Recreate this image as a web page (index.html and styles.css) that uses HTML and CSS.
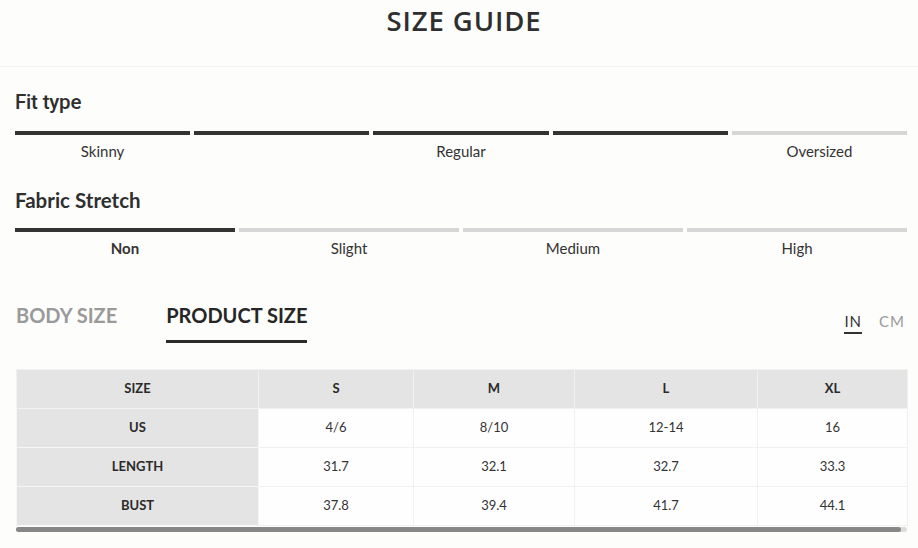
FILE: index.html
```html
<!DOCTYPE html>
<html>
<head>
<meta charset="utf-8">
<link rel="stylesheet" href="styles.css">
</head>
<body>
<header class="top">
  <h1 class="title">SIZE GUIDE</h1>
</header>
<main class="content">
  <section class="scale">
    <h2 class="scale-title fit-title">Fit type</h2>
    <div class="bars five">
      <span class="bar on"></span><span class="bar on"></span><span class="bar on"></span><span class="bar on"></span><span class="bar"></span>
    </div>
    <div class="labels five">
      <span class="lbl">Skinny</span><span class="lbl"></span><span class="lbl">Regular</span><span class="lbl"></span><span class="lbl">Oversized</span>
    </div>
  </section>
  <section class="scale stretch">
    <h2 class="scale-title">Fabric Stretch</h2>
    <div class="bars four">
      <span class="bar on"></span><span class="bar"></span><span class="bar"></span><span class="bar"></span>
    </div>
    <div class="labels four">
      <span class="lbl strong">Non</span><span class="lbl">Slight</span><span class="lbl">Medium</span><span class="lbl">High</span>
    </div>
  </section>
  <div class="tabs-row">
    <div class="tabs">
      <span class="tab">BODY SIZE</span>
      <span class="tab active">PRODUCT SIZE</span>
    </div>
    <div class="units">
      <span class="unit active">IN</span>
      <span class="unit">CM</span>
    </div>
  </div>
  <div class="table-wrap">
    <table class="sizes">
      <colgroup>
        <col class="c1"><col class="c2"><col class="c3"><col class="c4"><col class="c5">
      </colgroup>
      <thead>
        <tr><th>SIZE</th><th>S</th><th>M</th><th>L</th><th>XL</th></tr>
      </thead>
      <tbody>
        <tr><th>US</th><td>4/6</td><td>8/10</td><td>12-14</td><td>16</td></tr>
        <tr><th>LENGTH</th><td>31.7</td><td>32.1</td><td>32.7</td><td>33.3</td></tr>
        <tr><th>BUST</th><td>37.8</td><td>39.4</td><td>41.7</td><td>44.1</td></tr>
      </tbody>
    </table>
    <div class="scrollbar"><div class="thumb"></div></div>
  </div>
</main>
</body>
</html>
```
FILE: styles.css
```css
* { box-sizing: border-box; }
html, body { margin: 0; padding: 0; }
body {
  width: 918px;
  height: 548px;
  overflow: hidden;
  background: #fdfdfc;
  color: #333;
  font-family: "Lato", "Open Sans", sans-serif;
}
.top {
  height: 67px;
  border-bottom: 1px solid #f2f2f1;
  display: flex;
  justify-content: center;
}
.title {
  margin: 4px 0 0 10px;
  font-family: "Open Sans", sans-serif;
  font-weight: 600;
  font-size: 27.5px;
  letter-spacing: 0.9px;
  color: #2f2f2f;
  line-height: 34px;
}
.content {
  padding: 0 11px 0 15px;
}
.scale-title {
  margin: 0;
  font-weight: 700;
  font-size: 20.5px;
  line-height: 24px;
  color: #2f2f2f;
}
.fit-title {
  font-family: "Roboto", "Lato", sans-serif;
  font-weight: 500;
  font-size: 20.5px;
  margin-top: 23px;
  letter-spacing: -0.2px;
}
.stretch { margin-top: 27px; }
.bars {
  display: grid;
  gap: 4px;
  margin-top: 16px;
}
.fit-title + .bars { margin-top: 17px; }
.five { grid-template-columns: repeat(5, 1fr); }
.four { grid-template-columns: repeat(4, 1fr); }
.bar {
  height: 4px;
  background: #d6d6d6;
}
.bar.on { background: #333; }
.labels {
  display: grid;
  gap: 4px;
  margin-top: 6px;
}
.lbl {
  text-align: center;
  font-size: 15px;
  line-height: 20px;
  color: #333;
}
.lbl.strong { font-weight: 700; }
.tabs-row {
  display: flex;
  justify-content: space-between;
  align-items: flex-start;
  margin-top: 44px;
  padding-left: 1px;
}
.tabs {
  display: flex;
  gap: 49px;
}
.tab {
  font-weight: 700;
  font-size: 20px;
  line-height: 26px;
  color: #9a9a9a;
  letter-spacing: 0;
  padding-bottom: 12px;
}
.tab.active {
  color: #262626;
  border-bottom: 3px solid #2b2b2b;
}
.units {
  display: flex;
  gap: 17px;
  margin-top: 10px;
  margin-right: 2px;
}
.unit {
  font-size: 15px;
  letter-spacing: 1px;
  line-height: 18px;
  color: #9a9a9a;
  padding-bottom: 2px;
}
.unit.active {
  color: #333;
  border-bottom: 2px solid #333;
}
.table-wrap {
  margin-top: 26px;
  padding-left: 1px;
}
.sizes {
  width: 891px;
  border-collapse: collapse;
  table-layout: fixed;
  font-size: 13px;
  color: #333;
}
.c1 { width: 242px; }
.c2 { width: 155px; }
.c3 { width: 161px; }
.c4 { width: 183px; }
.c5 { width: 150px; }
.sizes th, .sizes td {
  height: 39px;
  padding: 0 0 2px 0;
  text-align: center;
  border: 1px solid #f1f1f0;
}
.sizes th {
  background: #e4e4e4;
  font-weight: 700;
  color: #2a2a2a;
}
.sizes tbody th { border-color: #f6f6f6; }
.sizes td {
  background: #fefefe;
  font-weight: 400;
}
.scrollbar {
  width: 891px;
  height: 5px;
  background: #dcdcdc;
  border-radius: 3px;
  margin-top: 1px;
}
.thumb {
  width: 885px;
  height: 5px;
  background: #878787;
  border-radius: 3px;
}
```
